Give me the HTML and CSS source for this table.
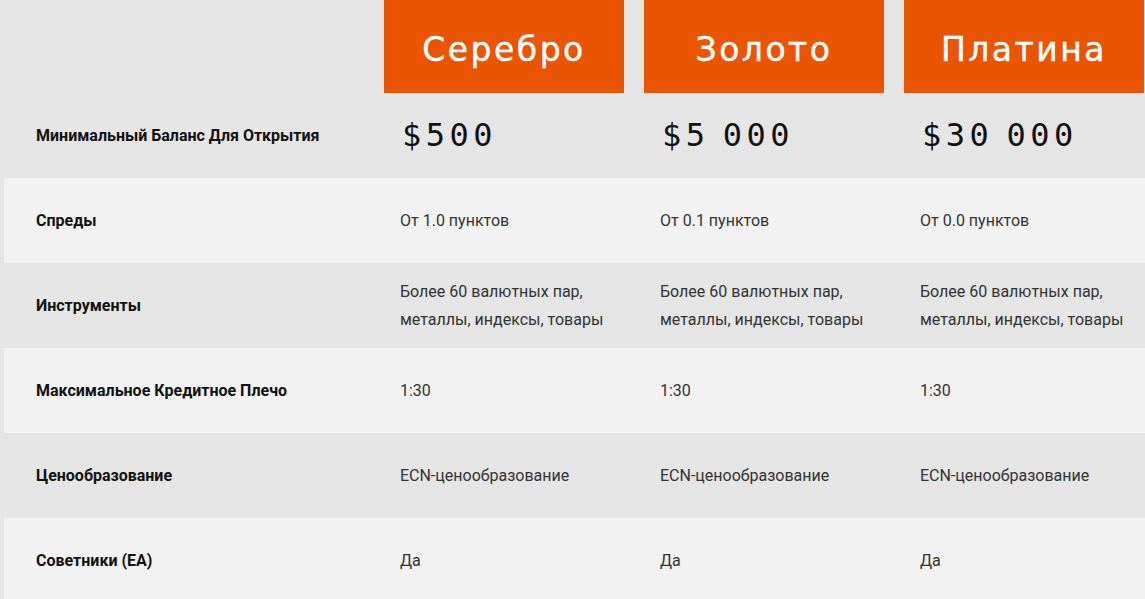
FILE: index.html
```html
<!DOCTYPE html>
<html lang="ru">
<head>
<meta charset="utf-8">
<title>Типы счетов</title>
<link rel="stylesheet" href="styles.css">
</head>
<body>
<div class="table">
  <div class="row head">
    <div class="cell empty"></div>
    <div class="plan">Серебро</div>
    <div class="plan">Золото</div>
    <div class="plan">Платина</div>
  </div>
  <div class="row dark">
    <div class="label">Минимальный Баланс Для Открытия</div>
    <div class="price">$500</div>
    <div class="price">$5<span class="gap"> </span>000</div>
    <div class="price">$30<span class="gap"> </span>000</div>
  </div>
  <div class="row light">
    <div class="label">Спреды</div>
    <div class="val">От 1.0 пунктов</div>
    <div class="val">От 0.1 пунктов</div>
    <div class="val">От 0.0 пунктов</div>
  </div>
  <div class="row dark">
    <div class="label">Инструменты</div>
    <div class="val">Более 60 валютных пар, металлы, индексы, товары</div>
    <div class="val">Более 60 валютных пар, металлы, индексы, товары</div>
    <div class="val">Более 60 валютных пар, металлы, индексы, товары</div>
  </div>
  <div class="row light">
    <div class="label">Максимальное Кредитное Плечо</div>
    <div class="val">1:30</div>
    <div class="val">1:30</div>
    <div class="val">1:30</div>
  </div>
  <div class="row dark">
    <div class="label">Ценообразование</div>
    <div class="val">ECN-ценообразование</div>
    <div class="val">ECN-ценообразование</div>
    <div class="val">ECN-ценообразование</div>
  </div>
  <div class="row light">
    <div class="label">Советники (EA)</div>
    <div class="val">Да</div>
    <div class="val">Да</div>
    <div class="val">Да</div>
  </div>
</div>
</body>
</html>
```

FILE: styles.css
```css
html, body {
  margin: 0;
  padding: 0;
  background: #e5e5e5;
}
body {
  font-family: Roboto, "Liberation Sans", sans-serif;
  color: #333;
}
.table {
  padding-left: 4px;
}
.row {
  display: grid;
  grid-template-columns: 360px 240px 240px 240px;
  column-gap: 20px;
  align-items: center;
  height: 85px;
}
.row.head {
  height: 93px;
  align-items: stretch;
}
.row.light {
  background: #f2f2f2;
}
.row.dark {
  background: #e5e5e5;
}
.plan {
  background: #ea5504;
  color: #fff;
  display: flex;
  align-items: center;
  justify-content: center;
  font-family: "DejaVu Sans", sans-serif;
  font-size: 33px;
  letter-spacing: 2.5px;
  padding-top: 5px;
  -webkit-text-stroke: 0.4px #fff;
}
.label {
  padding-left: 32px;
  font-weight: 700;
  font-size: 16px;
  color: #111;
}
.val {
  padding-left: 16px;
  font-size: 16px;
  line-height: 28px;
  color: #333;
  padding-right: 6px;
}
.price {
  padding-left: 18px;
  font-family: "DejaVu Sans Mono", monospace;
  font-size: 32px;
  letter-spacing: 4.5px;
  color: #111;
  padding-bottom: 2px;
}
.gap {
  letter-spacing: -6px;
}
```
